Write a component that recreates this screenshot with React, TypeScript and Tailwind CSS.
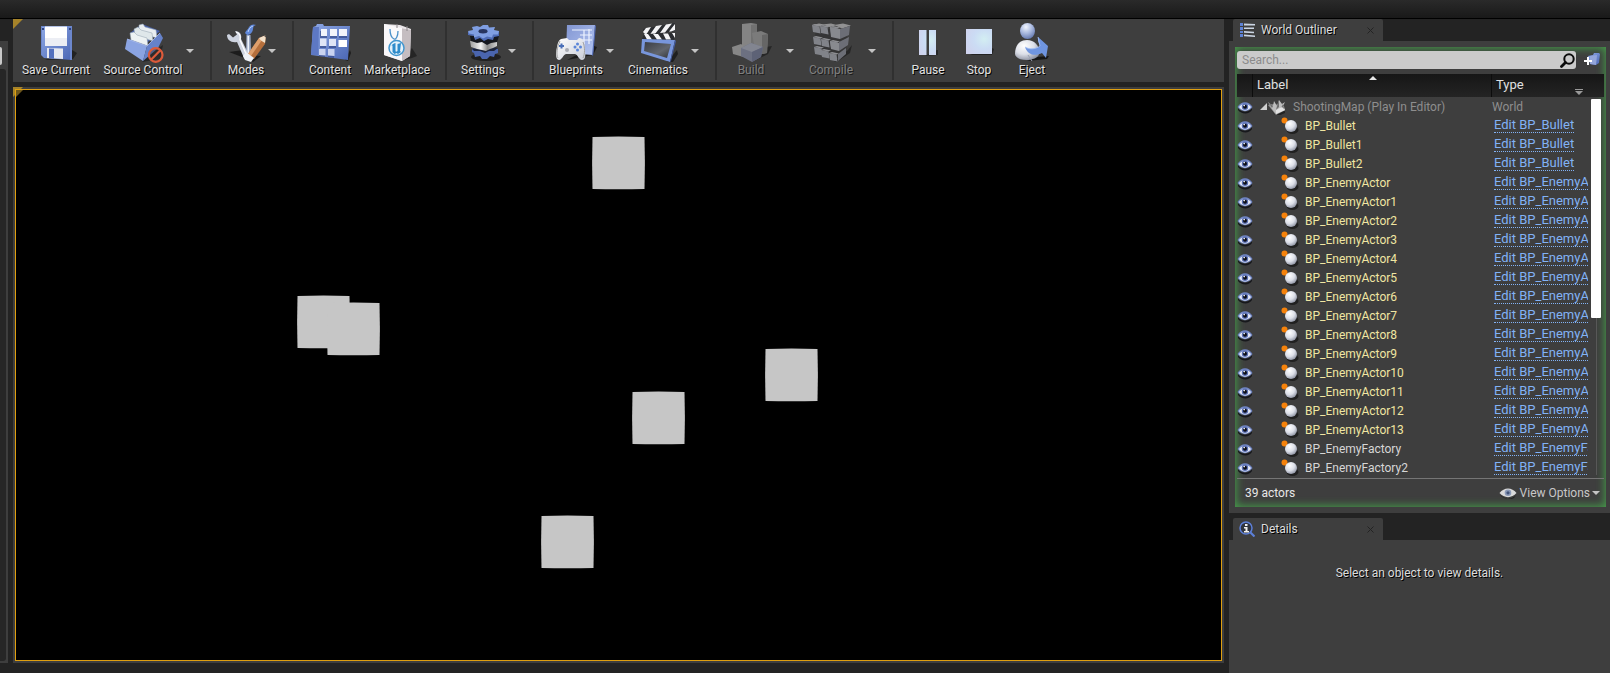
import type { ReactNode } from "react";

/* ---------- toolbar drawings ---------- */

function Art({ children, dim = false }: { children: ReactNode; dim?: boolean }) {
  return (
    <svg viewBox="0 0 42 42" className={dim ? "size-[42px] opacity-50" : "size-[42px]"} aria-hidden="true">
      {children}
    </svg>
  );
}

function SharedPaint() {
  return (
    <svg className="absolute size-0" aria-hidden="true">
      <defs>
        <linearGradient id="blue" x1="0" y1="0" x2="1" y2="1">
          <stop offset="0" stopColor="#8fa9e6" />
          <stop offset="1" stopColor="#4a66b4" />
        </linearGradient>
        <linearGradient id="paper" x1="0" y1="0" x2="1" y2="1">
          <stop offset="0" stopColor="#ffffff" />
          <stop offset="1" stopColor="#c9cdd8" />
        </linearGradient>
        <linearGradient id="screen" x1="0" y1="0" x2="1" y2="1">
          <stop offset="0" stopColor="#8296d2" />
          <stop offset="1" stopColor="#b4c5f2" />
        </linearGradient>
        <linearGradient id="slate" x1="0" y1="0" x2="1" y2="1">
          <stop offset="0" stopColor="#3a3d44" />
          <stop offset="0.6" stopColor="#62666e" />
          <stop offset="1" stopColor="#33363c" />
        </linearGradient>
        <linearGradient id="steel" x1="0" y1="0" x2="1" y2="0">
          <stop offset="0" stopColor="#9c9c9c" />
          <stop offset="0.4" stopColor="#f4f4f4" />
          <stop offset="0.65" stopColor="#8a8a8a" />
          <stop offset="1" stopColor="#cfcfcf" />
        </linearGradient>
        <radialGradient id="glass" cx="0.7" cy="0.4" r="0.8">
          <stop offset="0" stopColor="#d3eef2" />
          <stop offset="0.5" stopColor="#cbdcf4" />
          <stop offset="1" stopColor="#cfd3ee" />
        </radialGradient>
        <radialGradient id="ball" cx="0.38" cy="0.3" r="0.75">
          <stop offset="0" stopColor="#ffffff" />
          <stop offset="0.55" stopColor="#dcdfe8" />
          <stop offset="1" stopColor="#8b90a0" />
        </radialGradient>
        <radialGradient id="head" cx="0.4" cy="0.25" r="0.8">
          <stop offset="0" stopColor="#f2f6ff" />
          <stop offset="0.5" stopColor="#a9b9df" />
          <stop offset="1" stopColor="#5f74ad" />
        </radialGradient>
      </defs>
    </svg>
  );
}

const SaveArt = () => (
  <Art>
    <path d="M10 39l28-1 4-6-5-3z" fill="#1a1a1a" opacity=".8" />
    <path d="M6 5h31v34L9 37l-2-2z" fill="url(#blue)" />
    <path d="M6 5h31v34l-2-.2V6H7v29l-1-1z" fill="#6c87cd" />
    <path d="M10 5.500h22V25H10z" fill="#fff" />
    <path d="M10 17h22v8H10z" fill="#eceef4" />
    <path d="M12 27l16 .4V38l-16-1z" fill="#e7e9f0" />
    <path d="M14 27.500l5 .2v10L14 37z" fill="#5470bd" />
    <path d="M7 7h2v2H7zM34 7h2v2h-2z" fill="#2f437e" />
  </Art>
);

const SourceArt = () => (
  <Art>
    <path d="M20 41l14-12 7-5-3 14z" fill="#1c1c1c" opacity=".7" />
    <path d="M8 12l12-9 18 7-13 12z" fill="#465fa8" />
    <path d="M17 4l4-1 2 3 11 3 1 8-18-5z" fill="#e9eef2" stroke="#9aa9b4" strokeWidth=".5" />
    <path d="M12 8l4-2 3 3 11 3 1 8-18-5z" fill="#dfe7ea" stroke="#8f9fac" strokeWidth=".5" />
    <path d="M8 12l4-1 3 3 10 3 1 8-17-6z" fill="#edf2f3" stroke="#8f9fac" strokeWidth=".5" />
    <path d="M5 18l4 1 16 6-4 15L3 28z" fill="#8ba4e2" />
    <path d="M25 25l13-13 3 5-5 10-15 13z" fill="#6682ca" />
    <path d="M5 18l20 7 13-13" fill="none" stroke="#a9bcf0" strokeWidth=".8" />
    <circle cx="33.700" cy="34" r="6.800" fill="#3a3434" fillOpacity=".45" stroke="#dc5a3a" strokeWidth="2.200" />
    <path d="M29 38.700l9.400-9.400" stroke="#dc5a3a" strokeWidth="2.200" />
  </Art>
);

const ModesArt = () => (
  <Art>
    <path d="M4 31l14-2 6 5 12 1-8 6-6-3z" fill="#161616" opacity=".85" />
    <path d="M21.500 14h4l.5 20h-5z" fill="#9eabc6" />
    <path d="M22.500 15H24v18h-1.500z" fill="#eef3fa" />
    <path d="M20 12c1-3 3-3 4-6 2-3 5-3 7-2-4 1-2 4-4 7-1 2-3 3-5 3z" fill="#5f87d8" />
    <path d="M23 11c1-3 2-5 5-6" fill="none" stroke="#b9d0fa" />
    <path d="M10 10c5 0 7 4 6 8l8 16c2 4-2 6-5 3l-7-16c-6 1-10-2-10-7l2-1 4 3.500 4-3z" fill="#ced4e0" />
    <path d="M11 11c3 1 5 4 4 8l7 16" fill="none" stroke="#fff" strokeWidth="1.300" />
    <path d="M34 17l7-3-1 9-11 15-6-5z" fill="#b56f3c" />
    <path d="M34 17l3 2-11 16-3-2z" fill="#de9f6c" />
    <path d="M34 17l7-3-1 8c-2-1-5-3-6-5z" fill="#f2e1cb" />
    <path d="M39 14.800l2-.8-.3 2.500z" fill="#333" />
    <path d="M21 31l8 6-3 4-6-2-2-4z" fill="#eef1f6" />
  </Art>
);

const ContentArt = () => (
  <Art>
    <path d="M36 39l5-10 1 3-3 8z" fill="#151515" opacity=".8" />
    <path d="M2 34L4 6l3-1 1-2h6l1 2h26l-2 34z" fill="url(#blue)" />
    <path d="M2 34L4 6l6 0-1 28z" fill="#5d78c4" />
    <path d="M11 10h7v7h-7zM21 9h7v8h-7zM30 9h8v8h-8zM11 20h6v7h-6zM20 20h7v7h-7zM10 29h6l0 7-6-1zM19 29h6v8l-6-1z" fill="#2c3f7d" opacity=".6" />
    <path d="M12 8h6v7h-6zM21 8h7v7h-7zM30 8h8v7h-8z" fill="#f2f4fb" />
    <path d="M11 17.500h6.500V25H11zM20 18h7v7h-7z" fill="#dfe5f6" />
    <path d="M29.500 19h8.500v7h-8.500z" fill="#fff" />
    <path d="M10 28h6.500v6.500L10 34zM19 28h6.500v7l-6.500-.5z" fill="#c9d3f0" />
  </Art>
);

const MarketArt = () => (
  <Art>
    <path d="M24 40l12-3 5-2-5-8z" fill="#151515" opacity=".6" />
    <path d="M8 3l16 1 11 4-1 27-8 5-18-6z" fill="#e9e5e8" />
    <path d="M24 7l11 2-1 26-8 5z" fill="#c5bdc1" />
    <path d="M8 3l18 4v33L8 34z" fill="#faf8fa" />
    <path d="M14 8c0 5 2 9 4 10s4-3 4-8" fill="none" stroke="#4a8fc8" strokeWidth="1.300" />
    <path d="M21 3v4M31 5v5" stroke="#8a8589" />
    <circle cx="20.500" cy="27" r="7.500" fill="#e6f2fa" stroke="#4196cf" strokeWidth="1.500" />
    <path d="M15.500 24.500c1-1.500 3-2.300 4-2.500v8c0 1 1 1 2 0v-7l3.500-1-1 8 1 1-3 2-1.500-1-2 1-2-2v-6.500z" fill="#2f8ccb" />
  </Art>
);

const SettingsArt = () => (
  <Art>
    <ellipse cx="24" cy="36" rx="15" ry="4" fill="#141414" opacity=".7" />
    <path d="M10 28l7-2h12l7 2v4l-3 1-1 3-4-1-3 3h-5l-2-3-5 1-1-4-2-1z" fill="#4a65ae" />
    <path d="M10 28l7-2h12l7 1-4 3-5 0-4 2-5-2-6 0z" fill="#1c243c" />
    <path d="M8 20h27v5l-4 2-3 1-4 2-4-1-5-1-6-2z" fill="url(#steel)" />
    <path d="M8 15h29l-2 6-6 1-4 2-5-3-5 1-6-2z" fill="#15171e" />
    <path d="M6 11l31-1v5l-5 1-1 3-5-1-4 2-4-3-5 2-1-4-6-1z" fill="#4f6cb6" />
    <path d="M6 10l5-1-1-3 5-1 3 1 3-2h5l1 2.500 6-.5-1 3 5 1-1 3.500-5 0-1 3-5-1-4 2-4-2.500-5 1.500v-3l-5-1z" fill="#7f9ee2" />
    <ellipse cx="21" cy="10.300" rx="4.500" ry="2.200" fill="#27345f" />
  </Art>
);

const BlueprintArt = () => (
  <Art>
    <path d="M12 39l26-5 4-8-3-1z" fill="#131313" opacity=".8" />
    <path d="M12 4h28l-2 30-27-2z" fill="url(#screen)" />
    <path d="M40 4l1 1-3 30-1-1z" fill="#5169b3" />
    <path d="M17 9h20M25 14h12M26 19h11M29 9v14M34 8v15" stroke="#eef3ff" strokeWidth="1.200" fill="none" />
    <path d="M6 18l6-1 2 2h8l2-2c5 0 6 5 6 12 1 6 0 10-3 10s-4-5-7-6h-9c-3 1-4 6-7 6-4 0-3-9-2-13 1-5 2-7 4-8z" fill="url(#paper)" />
    <path d="M5 20c-3 6-4 14-2 17M28 21c2 5 2 12 0 16" fill="none" stroke="#9a9a9a" strokeWidth=".9" />
    <path d="M4 25h5M6.500 22.500v5" stroke="#4a6fb8" strokeWidth="2" />
    <circle cx="22.500" cy="23" r="1.500" fill="#5b86d8" />
    <circle cx="20" cy="26" r="1.500" fill="#5b86d8" />
    <circle cx="25.500" cy="26" r="1.500" fill="#5b86d8" />
    <circle cx="22.500" cy="29" r="1.500" fill="#5b86d8" />
    <circle cx="12" cy="29" r="2" fill="#a9acb4" />
  </Art>
);

const CinemaArt = () => (
  <Art>
    <path d="M30 41l10-12 1 4-5 8z" fill="#131313" opacity=".7" />
    <path d="M6 8l32-6v8L8 15z" fill="#2b2d31" />
    <path d="M9 7l5-1-5 8-3-3zM19 5l6-1-7 9-5 .5zM29 3.500l6-1-7 9-5 .5zM38 3v6l-4 1.500-2 0z" fill="#f4f4f6" />
    <path d="M7 13l31-1-1 7-32-1z" fill="#2b2d31" />
    <path d="M7 13h4l4 5.500h-5zM16 13h5l4 5.500h-5zM26 12.500h5l3 6h-5zM35 12h3v5z" fill="#f4f4f6" />
    <path d="M5 18l33 1-5 22L4 32z" fill="#7896dc" />
    <path d="M38 19l1 1-5 20-1 1z" fill="#435ca4" />
    <path d="M8 21l26 2-4 14-23-7z" fill="url(#slate)" />
  </Art>
);

const BuildArt = () => (
  <Art dim>
    <path d="M22 41l16-8 4-8-6 1z" fill="#0f0f0f" />
    <path d="M12 3l9-1 6 1v22H12z" fill="#c9c9c9" />
    <path d="M21 4l6-1v22h-6z" fill="#a5a5a5" />
    <path d="M22 12l9-2 7 3-1 19-11 2z" fill="#b9b9b9" />
    <path d="M32 14l6-1-1 19-5 1z" fill="#8f8f8f" />
    <path d="M2 26l9-3 6 4v10L3 33z" fill="#cfcfcf" />
    <path d="M11 27l10-5 12 4-2 10-9 5-11-6z" fill="#9aa2c4" />
    <path d="M11 27l10-5 12 4-11 5z" fill="#c5cbe2" />
    <path d="M22 31l11-5-2 10-9 5z" fill="#7d86ae" />
  </Art>
);

const compileCubes = [
  [2, 4], [10, 5], [20, 6],
  [3, 16], [11, 18], [20, 20],
  [4, 26], [11, 29], [19, 32],
];

const CompileArt = () => (
  <Art dim>
    <path d="M24 41l14-12 4-5-2 8-12 8z" fill="#0f0f0f" />
    <path d="M5 8h28l4 2-1 22-10 6-20-8z" fill="#2e2e30" />
    <path d="M2 4l7-1.500 5 1L10 5zM12 3.500l9-1 6 1.500-7 2zM24 4l9-1.500 8 2-9 3z" fill="#e4e4e6" />
    {compileCubes.map(([x, y]) => (
      <g key={`${x}-${y}`}>
        <path d={`M${x} ${y}l7.500 1.500 1 7-7.500-1.500z`} fill="#c3c7d4" />
        <path d={`M${x} ${y}l3-1 7 1.500-2.500 1z`} fill="#dcdee6" />
      </g>
    ))}
    <path d="M30 8l10-3-1 9-9 4zM29 21l10-5-1 8-9 6zM28 33l8-6v6l-8 7z" fill="#9b9fae" />
    <path d="M20 6l10 2v10l-9-2zM20 20l9 2v8l-8-2z" fill="#d2d5e0" />
  </Art>
);

const PauseArt = () => (
  <Art>
    <path d="M18 35l13-1v-5h-1z" fill="#1d1d1d" opacity=".7" />
    <path d="M12 9h7.500v25H12zM22 9h7v25h-7z" fill="url(#glass)" />
  </Art>
);

const StopArt = () => (
  <Art>
    <path d="M12 34h22l2-6-4-2z" fill="#1d1d1d" opacity=".8" />
    <path d="M8 8h26v25H8z" fill="url(#glass)" />
  </Art>
);

const EjectArt = () => (
  <Art>
    <path d="M16 40l20-2 2-3-12 1z" fill="#0e0e0e" opacity=".85" />
    <path d="M4 33c0-8 4-14 12-14s13 6 12 14c-1 7-22 9-24 0z" fill="url(#ball)" />
    <ellipse cx="16.500" cy="10" rx="7.500" ry="8" fill="url(#head)" />
    <path d="M14 26c5 3 11 2 15-1l-2-5 0-4 10 9-2 12-4-5c-6 3-14 3-17-6z" fill="#6f95e0" />
    <path d="M14 26c5 3 11 2 15-1l-2-9" fill="none" stroke="#a8c3f5" strokeWidth=".8" />
    <path d="M17 34l4 6" stroke="#9aa1b2" />
  </Art>
);

/* ---------- toolbar ---------- */

type Tool = { label: string; art: ReactNode; place: string; menu?: boolean; off?: boolean };

const toolGroups: Tool[][] = [
  [
    { label: "Save Current", art: <SaveArt />, place: "ml-0.5 w-[82px]" },
    { label: "Source Control", art: <SourceArt />, place: "ml-1 w-[84px]", menu: true },
  ],
  [{ label: "Modes", art: <ModesArt />, place: "ml-[13px] w-[42px]", menu: true }],
  [
    { label: "Content", art: <ContentArt />, place: "ml-[9px] w-[54px]" },
    { label: "Marketplace", art: <MarketArt />, place: "ml-[3px] w-[74px] -mr-1" },
  ],
  [{ label: "Settings", art: <SettingsArt />, place: "ml-3 w-12", menu: true }],
  [
    { label: "Blueprints", art: <BlueprintArt />, place: "ml-[13px] w-[58px]", menu: true },
    { label: "Cinematics", art: <CinemaArt />, place: "ml-[11px] w-16", menu: true },
  ],
  [
    { label: "Build", art: <BuildArt />, place: "ml-0 w-[68px]", menu: true, off: true },
    { label: "Compile", art: <CompileArt />, place: "ml-0 w-[72px]", menu: true, off: true },
  ],
  [
    { label: "Pause", art: <PauseArt />, place: "ml-[9px] w-[50px]" },
    { label: "Stop", art: <StopArt />, place: "ml-[3px] w-[46px]" },
    { label: "Eject", art: <EjectArt />, place: "ml-[9px] w-[42px]" },
  ],
];

function Caret() {
  return (
    <svg viewBox="0 0 8 4" className="h-1 w-2" aria-hidden="true">
      <path d="M0 0h8L4 4z" fill="#c4c4c4" />
    </svg>
  );
}

function Toolbar() {
  return (
    <div role="toolbar" aria-label="Level editor" className="relative flex h-[63px] bg-[#3e3e3e] pt-0.5">
      <CornerMark />
      {toolGroups.map((group, i) => (
        <div key={group[0].label} className="flex">
          {i > 0 && <div className="ml-[15px] h-[59px] w-0.5 bg-[#303030]" />}
          {group.map((tool) => (
            <div key={tool.label} className="flex">
              <div className={`flex shrink-0 justify-center ${tool.place}`}>
                <button type="button" disabled={tool.off} className="flex flex-col items-center">
                  {tool.art}
                  <span
                    className={
                      tool.off
                        ? "text-xs leading-[14px] whitespace-nowrap text-[#808080] text-shadow-[1px_1px_0_#1c1c1c]"
                        : "text-xs leading-[14px] whitespace-nowrap text-[#e2e2e2] text-shadow-[1px_1px_0_#000]"
                    }
                  >
                    {tool.label}
                  </span>
                </button>
              </div>
              {tool.menu && (
                <button type="button" aria-label={`${tool.label} options`} className="flex h-[59px] w-2.5 items-center justify-center">
                  <Caret />
                </button>
              )}
            </div>
          ))}
        </div>
      ))}
    </div>
  );
}

function CornerMark() {
  return (
    <svg viewBox="0 0 10 10" className="absolute top-0 left-0 size-2.5" aria-hidden="true">
      <path d="M0 0h10L0 10z" fill="#a5832a" />
    </svg>
  );
}

/* ---------- viewport ---------- */

const cubes = [
  [576, 46],
  [281, 205],
  [311, 212],
  [749, 258],
  [616, 301],
  [525, 425],
];

function Viewport() {
  return (
    <main className="relative flex flex-1 bg-[#3e3e3e] p-0.5">
      <CornerMark />
      <div className="relative flex-1 border border-[#e0a010] bg-black">
        <svg viewBox="0 0 1205 570" className="absolute size-full" role="img" aria-label="Game view">
          <path d="M0 0h7L0 7z" fill="#6e571b" />
          {cubes.map(([x, y]) => (
            <path
              key={x}
              d={`M${x + 0.5} ${y + 0.9}q26-.8 52 0q.8 26 0 52q-26 .8-52 0q-.8-26 0-52z`}
              fill="#c6c6c6"
            />
          ))}
        </svg>
      </div>
    </main>
  );
}

/* ---------- world outliner ---------- */

type Actor = { name: string; edit: string; spawned: boolean };

const actors: Actor[] = [
  ...["", "1", "2"].map((n) => ({ name: `BP_Bullet${n}`, edit: "Edit BP_Bullet", spawned: true })),
  ...["", "1", "2", "3", "4", "5", "6", "7", "8", "9", "10", "11", "12", "13"].map((n) => ({
    name: `BP_EnemyActor${n}`,
    edit: "Edit BP_EnemyActor",
    spawned: true,
  })),
  ...["", "2"].map((n) => ({ name: `BP_EnemyFactory${n}`, edit: "Edit BP_EnemyFactory", spawned: false })),
];

function Eye() {
  return (
    <svg viewBox="0 0 16 14" className="h-3.5 w-4" aria-hidden="true">
      <path d="M1 8c3 5 11 5 14 0v2c-3 5-11 4-14 0z" fill="#17181c" />
      <path d="M.5 7C4 .5 12 .5 15.500 7 12 12.500 4 12.500.5 7z" fill="#7186c4" />
      <path d="M2 7c3-4 9-4 12 0-3 4.500-9 4.500-12 0z" fill="#e9ecf6" />
      <circle cx="8" cy="6.800" r="3.200" fill="#5a70b4" />
      <circle cx="8" cy="6.800" r="2" fill="#0c0e16" />
      <circle cx="7.200" cy="5.600" r=".8" fill="#fff" />
    </svg>
  );
}

function ActorIcon() {
  return (
    <svg viewBox="0 0 18 18" className="size-[18px]" aria-hidden="true">
      <ellipse cx="11.500" cy="13" rx="6" ry="4" fill="#1b1b1b" opacity=".85" />
      <circle cx="3.500" cy="3.500" r="3" fill="#f5820b" />
      <circle cx="10" cy="9" r="6" fill="url(#ball)" />
    </svg>
  );
}

function WorldIcon() {
  return (
    <svg viewBox="0 0 20 16" className="h-4 w-5" aria-hidden="true">
      <path d="M3 9l5 7 10-4v2l-9 4z" fill="#222" />
      <path d="M1 6l6-1 10 2 1 4-9 5-4-5z" fill="#8f8f8f" />
      <path d="M1 3l5 4 1-5 3 5 2-6 3 4 3-2-2 4 2 4-9 4-4-5z" fill="#bdbdbd" />
      <path d="M1 3l5 4-1 2zM12 1l0 7-3 3 1-4zM16 5l1 5-3-1z" fill="#6e6e6e" />
      <path d="M9 11l6-3 3 3-9 4z" fill="#e2e2e2" />
    </svg>
  );
}

function PanelTab({ id, title, icon }: { id: string; title: string; icon: ReactNode }) {
  return (
    <div className="ml-1 flex h-[22px] w-[150px] items-center rounded-t-[2px] bg-[#3e3e3e] pr-[9px] pl-1.5">
      {icon}
      <h2 id={id} className="ml-1.5 flex-1 text-xs text-[#dcdcdc] text-shadow-[1px_1px_0_#000]">
        {title}
      </h2>
      <button type="button" aria-label={`Close ${title}`}>
        <svg viewBox="0 0 7 7" className="size-[7px]" aria-hidden="true">
          <path d="M.5.5l6 6m0-6l-6 6" stroke="#232323" strokeWidth="1" />
        </svg>
      </button>
    </div>
  );
}

function OutlinerIcon() {
  return (
    <svg viewBox="0 0 16 16" className="size-4" aria-hidden="true">
      <path d="M1 1h3v3H1zM1 5h3v3H1zM1 9h3v2H1zM1 12h3v3H1z" fill="#5f83d6" />
      <path d="M5 1.500l11 .5v1.500L5 3.500zM5 5.500h10V7H5zM5 9l10 .7v1.500L5 10.700zM5 12.500l11 1V15l-11-.8z" fill="#ccd6e4" />
    </svg>
  );
}

function DetailsIcon() {
  return (
    <svg viewBox="0 0 16 16" className="size-4" aria-hidden="true">
      <path d="M11 11l4.500 4.500" stroke="#5c7fd8" strokeWidth="2.200" />
      <circle cx="7" cy="7" r="6" fill="#30343d" stroke="#5c7fd8" strokeWidth="1.500" />
      <path d="M6 3h2.500v2H6zM5 6h3.500v4H10v1.500H5V10h1.500V7.500H5z" fill="#f0f0f0" />
    </svg>
  );
}

function Outliner() {
  return (
    <section aria-labelledby="outliner-title">
      <PanelTab id="outliner-title" title="World Outliner" icon={<OutlinerIcon />} />
      <div className="bg-[#3e3e3e] pt-1.5 pr-1 pb-1.5 pl-1.5">
        <div className="bg-[#3e3e3e] px-0.5 pt-1 shadow-[inset_0_0_9px_1px_#45a04a]">
          <div className="flex items-center">
            <div className="flex h-[18px] flex-1 items-center rounded-[3px] bg-[#cbcbcb] pr-px">
              <input
                type="text"
                aria-label="Search actors"
                placeholder="Search..."
                className="w-full min-w-0 flex-1 bg-transparent px-[5px] text-xs leading-4 text-[#222] outline-none placeholder:text-[#8b8b8b]"
              />
              <svg viewBox="0 0 15 15" className="size-[15px]" aria-hidden="true">
                <circle cx="9" cy="6" r="4.700" fill="none" stroke="#0b0b0b" strokeWidth="2" />
                <path d="M5.500 9.500L1.500 13.500" stroke="#0b0b0b" strokeWidth="2.800" strokeLinecap="round" />
              </svg>
            </div>
            <button type="button" aria-label="Create folder" className="mr-1 ml-2 h-4">
              <svg viewBox="0 0 16 16" className="size-4" aria-hidden="true">
                <path d="M4 4l5-1 1-2h5l1 1-1 9-3 2-6-1z" fill="url(#blue)" />
                <path d="M6 4l7-1-1 10-6-1z" fill="#93a5da" />
                <path d="M4 5v8M0 9h8" stroke="#fff" strokeWidth="2" />
              </svg>
            </button>
          </div>

          <div className="relative mt-[5px]">
            <table className="w-full table-fixed border-separate border-spacing-0 text-left text-xs leading-4">
              <colgroup>
                <col className="w-[15px]" />
                <col />
                <col className="w-[113px]" />
              </colgroup>
              <thead className="text-[13px]">
                <tr className="h-[23px] bg-linear-to-b from-[#161616] to-[#242424]">
                  <th aria-label="Visibility" className="p-0" />
                  <th className="relative border-l border-[#0c0c0c] py-0 pr-0 pb-0.5 pl-1 font-normal text-[#e0e0e0]">
                    Label
                    <svg viewBox="0 0 8 4" className="absolute top-0.5 left-[116px] h-1 w-2" aria-hidden="true">
                      <path d="M0 4h8L4 0z" fill="#e8e8e8" />
                    </svg>
                  </th>
                  <th className="relative border-l border-[#0c0c0c] py-0 pr-0 pb-0.5 pl-1 font-normal text-[#e0e0e0]">
                    Type
                    <svg viewBox="0 0 8 6" className="absolute right-[21px] bottom-0.5 h-1.5 w-2" aria-hidden="true">
                      <path d="M0 0h8v1H0zM0 2h8L4 6z" fill="#9a9a9a" />
                    </svg>
                  </th>
                </tr>
              </thead>
              <tbody>
                <tr className="h-[19px] text-[#8e8e8e]">
                  <td className="p-0">
                    <Eye />
                  </td>
                  <td className="p-0">
                    <div className="flex h-[19px] items-center pl-2 whitespace-nowrap">
                      <svg viewBox="0 0 7 7" className="size-[7px]" aria-hidden="true">
                        <path d="M7 0v7H0z" fill="#cfcfcf" />
                      </svg>
                      <WorldIcon />
                      <span className="ml-1.5">ShootingMap (Play In Editor)</span>
                    </div>
                  </td>
                  <td className="py-0 pr-0 pl-px">World</td>
                </tr>
                {actors.map((actor) => (
                  <tr key={actor.name} className="h-[19px]">
                    <td className="p-0">
                      <Eye />
                    </td>
                    <td className="p-0">
                      <div
                        className={
                          actor.spawned
                            ? "flex h-[19px] items-center gap-1.5 pl-[29px] text-[#f0e6a2]"
                            : "flex h-[19px] items-center gap-1.5 pl-[29px] text-[#d6d6d6]"
                        }
                      >
                        <ActorIcon />
                        {actor.name}
                      </div>
                    </td>
                    <td className="p-0">
                      <div className="mr-4 ml-[3px] flex h-[19px] items-center overflow-hidden text-[13px] whitespace-nowrap">
                        <a href="#edit" className="border-b border-dotted border-[#82b2f5] leading-[14px] text-[#82b2f5]">
                          {actor.edit}
                        </a>
                      </div>
                    </td>
                  </tr>
                ))}
              </tbody>
            </table>
            <div className="absolute top-[25px] right-[3px] bottom-0.5 flex w-2.5 flex-col items-center">
              <div className="h-[219px] w-full rounded-[1px] bg-white" />
              <div className="w-px flex-1 bg-[#585858]" />
            </div>
          </div>

          <div className="mt-px flex h-[29px] items-center justify-between border-t border-[#757575] pr-1 pl-2 text-xs">
            <span className="text-[#e8e8e8]">39 actors</span>
            <button type="button" className="flex items-center text-[#c8c8c8]">
              <svg viewBox="0 0 18 12" className="mr-[3px] h-3 w-[18px]" aria-hidden="true">
                <path d="M1 8c4 5 12 5 16 0l-2 3c-4 2-9 1-14-3z" fill="#1c1c1c" />
                <path d="M.5 6C5 0 13 0 17.500 6 13 11.500 5 11.500.5 6z" fill="#dadada" />
                <circle cx="9" cy="5.800" r="3.300" fill="#8b9ab8" />
                <circle cx="9" cy="5.800" r="1.600" fill="#43547a" />
              </svg>
              View Options
              <span className="ml-0.5">
                <Caret />
              </span>
            </button>
          </div>
        </div>
      </div>
    </section>
  );
}

function Details() {
  return (
    <section aria-labelledby="details-title" className="mt-[5px] flex flex-1 flex-col">
      <PanelTab id="details-title" title="Details" icon={<DetailsIcon />} />
      <div className="flex-1 bg-[#3e3e3e] pt-6 text-center">
        <p className="text-xs leading-[18px] text-[#dcdcdc] text-shadow-[1px_1px_0_#000]">
          Select an object to view details.
        </p>
      </div>
    </section>
  );
}

export default function App() {
  return (
    <div className="flex min-h-screen flex-col bg-[#232323] font-[Roboto,sans-serif]">
      <SharedPaint />
      <header className="h-[19px] border-b border-black bg-linear-to-b from-[#2a2a2a] to-[#191919]" />
      <div className="flex flex-1">
        <aside className="mt-[22px] mb-2.5 flex w-2 flex-col bg-[#3e3e3e] pt-1.5 pb-0.5">
          <div className="h-[18px] w-0.5 rounded-r-[2px] bg-[#c9c9c9]" />
          <div className="mt-1 mr-0.5 flex-1 rounded-r-[3px] bg-[#262626]" />
        </aside>
        <div className="mb-2.5 ml-[5px] flex min-w-0 flex-1 flex-col gap-[5px]">
          <Toolbar />
          <Viewport />
        </div>
        <div className="ml-[5px] flex w-[381px] shrink-0 flex-col">
          <Outliner />
          <Details />
        </div>
      </div>
    </div>
  );
}
